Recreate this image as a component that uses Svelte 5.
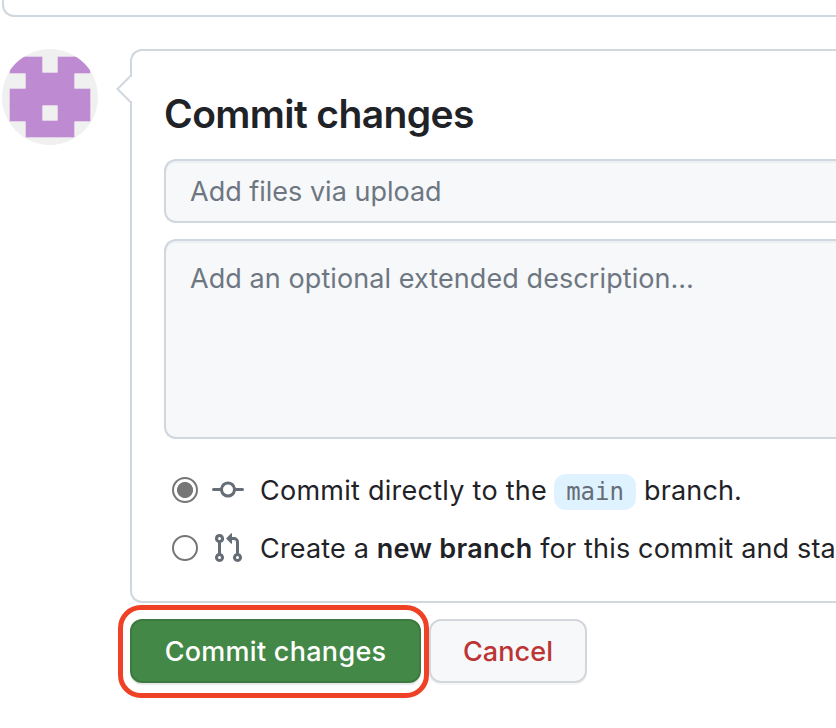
<script>
  const cells = [[0,0],[1,0],[3,0],[4,0],[1,1],[2,1],[3,1],[0,2],[1,2],[2,2],[3,2],[4,2],[0,3],[1,3],[3,3],[4,3],[1,4],[2,4],[3,4]];
  let target = $state('direct');
</script>

<div class="page">
  <div class="upload-box"></div>
  <div class="row">
    <svg class="avatar" viewBox="0 0 96 96" aria-hidden="true">
      <clipPath id="round"><circle cx="48" cy="48" r="48" /></clipPath>
      <g clip-path="url(#round)">
        <rect width="96" height="96" fill="#f0f0f0" />
        <g fill="#be8ad1">
          {#each cells as [x, y]}
            <rect x={7.7 + x * 16} y={7.7 + y * 16} width="16.6" height="16.6" />
          {/each}
        </g>
      </g>
    </svg>
    <div class="main">
      <section class="card">
        <svg class="caret" width="16" height="30" viewBox="0 0 16 30" aria-hidden="true">
          <path d="M15 1.5 1.5 15 15 28.5" fill="#fff" stroke="#d0d7de" stroke-width="2" />
          <path d="M14 3h2v24h-2z" fill="#fff" />
        </svg>
        <h3>Commit changes</h3>
        <div class="field summary"><span>Add files via upload</span></div>
        <div class="field description"><span>Add an optional extended description…</span></div>
        <div class="choices">
          <label class="choice">
            <input type="radio" value="direct" bind:group={target} />
            <svg class="icon" viewBox="0 0 16 16" aria-hidden="true"><path d="M11.93 8.5a4.002 4.002 0 0 1-7.86 0H.75a.75.75 0 0 1 0-1.5h3.32a4.002 4.002 0 0 1 7.86 0h3.32a.75.75 0 0 1 0 1.5Zm-1.43-.75a2.5 2.5 0 1 0-5 0 2.5 2.5 0 0 0 5 0Z" /></svg>
            <span class="label first">Commit directly to the</span><code>main</code><span class="label">branch.</span>
          </label>
          <label class="choice">
            <input type="radio" value="branch" bind:group={target} />
            <svg class="icon" viewBox="0 0 16 16" aria-hidden="true"><path d="M1.5 3.25a2.25 2.25 0 1 1 3 2.122v5.256a2.251 2.251 0 1 1-1.5 0V5.372A2.25 2.25 0 0 1 1.5 3.25Zm5.677-.177L9.573.677A.25.25 0 0 1 10 .854V2.5h1A2.5 2.5 0 0 1 13.5 5v5.628a2.251 2.251 0 1 1-1.5 0V5a1 1 0 0 0-1-1h-1v1.646a.25.25 0 0 1-.427.177L7.177 3.427a.25.25 0 0 1 0-.354ZM3.75 2.5a.75.75 0 1 0 0 1.5.75.75 0 0 0 0-1.5Zm0 9.5a.75.75 0 1 0 0 1.5.75.75 0 0 0 0-1.5Zm8.25.75a.75.75 0 1 0 1.5 0 .75.75 0 0 0-1.5 0Z" /></svg>
            <span class="label second">Create a <b>new branch</b> for this commit and sta</span>
          </label>
        </div>
      </section>
      <div class="actions">
        <div class="highlighted"><button class="primary">Commit changes</button></div>
        <button class="cancel">Cancel</button>
      </div>
    </div>
  </div>
</div>

<style>
  :global(body) { margin: 0; background: #fff; }
  .page {
    width: 836px; height: 728px; overflow: hidden; box-sizing: border-box;
    font-family: Inter, "Liberation Sans", sans-serif; font-size: 27px; color: #1f2328;
  }
  .upload-box {
    height: 17px; margin-left: 2px; box-sizing: border-box;
    border: solid #d0d7de; border-width: 0 0 2px 2px; border-bottom-left-radius: 12px;
  }
  .row { display: flex; margin-top: 32px; padding-left: 2px; }
  .avatar { width: 96px; height: 96px; flex: none; margin-right: 32px; }
  .main { flex: none; width: 706px; }
  .card {
    position: relative; height: 554px; box-sizing: border-box; padding: 30px 0 0 32px;
    border: solid #d0d7de; border-width: 2px 0 2px 2px; border-radius: 12px 0 0 12px;
  }
  .caret { position: absolute; left: -16px; top: 23px; }
  h3 { margin: 0 0 16px; height: 62px; line-height: 66px; font-size: 39px; font-weight: 600; letter-spacing: -0.6px; white-space: nowrap; }
  .field {
    box-sizing: border-box; background: #f6f8fa; color: #6e7781;
    border: solid #d0d7de; border-width: 2px 0 2px 2px; border-radius: 12px 0 0 12px;
    box-shadow: inset 0 2px 0 rgba(208, 215, 222, .2); padding-left: 24px; white-space: nowrap;
  }
  .summary { height: 64px; line-height: 61px; margin-bottom: 16px; }
  .description { height: 200px; line-height: 44px; padding-top: 16px; letter-spacing: .08px; }
  .choices { padding: 30px 0 0 8px; }
  .choice { display: flex; align-items: center; height: 42px; margin-bottom: 16px; white-space: nowrap; }
  input {
    appearance: none; box-sizing: border-box; width: 26px; height: 26px; margin: 0 14px 0 0; flex: none;
    border: 2px solid #767676; border-radius: 50%; background: #fff;
  }
  input:checked { background: radial-gradient(circle, #767676 7.6px, #fff 8.4px); }
  .icon { width: 32px; height: 32px; flex: none; fill: #656d76; margin-right: 16px; }
  .label { line-height: 40px; padding-top: 2px; letter-spacing: .14px; }
  .first { letter-spacing: .26px; }
  .second { letter-spacing: .17px; }
  b { font-weight: 600; letter-spacing: .25px; }
  code {
    box-sizing: border-box; width: 82px; height: 36px; margin: 3px 8px 0 7px; border-radius: 12px;
    background: #dff2ff; color: #656d76; text-align: center; line-height: 37px;
    font-family: "DejaVu Sans Mono", monospace; font-size: 24px;
  }
  .actions { display: flex; gap: 8px; margin-top: 16px; }
  .highlighted { position: relative; }
  .highlighted::after {
    content: ""; position: absolute; left: -12px; top: -14px; width: 311px; height: 93px;
    box-sizing: border-box; border: 5px solid #ee4125; border-radius: 23px; z-index: 1; pointer-events: none;
  }
  button {
    display: block; box-sizing: border-box; height: 64px; padding: 2px 0 0; border-radius: 12px;
    font: 550 27px/58px Inter, "Liberation Sans", sans-serif; white-space: nowrap;
  }
  .primary { width: 291px; color: #fff; background: #438846; border: 2px solid #3c7a40; box-shadow: 0 2px 0 rgba(31, 35, 40, .1); letter-spacing: .28px; }
  .cancel { width: 158px; color: #bc3433; background: #f6f8fa; border: 2px solid #d3d7dc; box-shadow: 0 2px 0 rgba(31, 35, 40, .04); letter-spacing: .1px; }
</style>
